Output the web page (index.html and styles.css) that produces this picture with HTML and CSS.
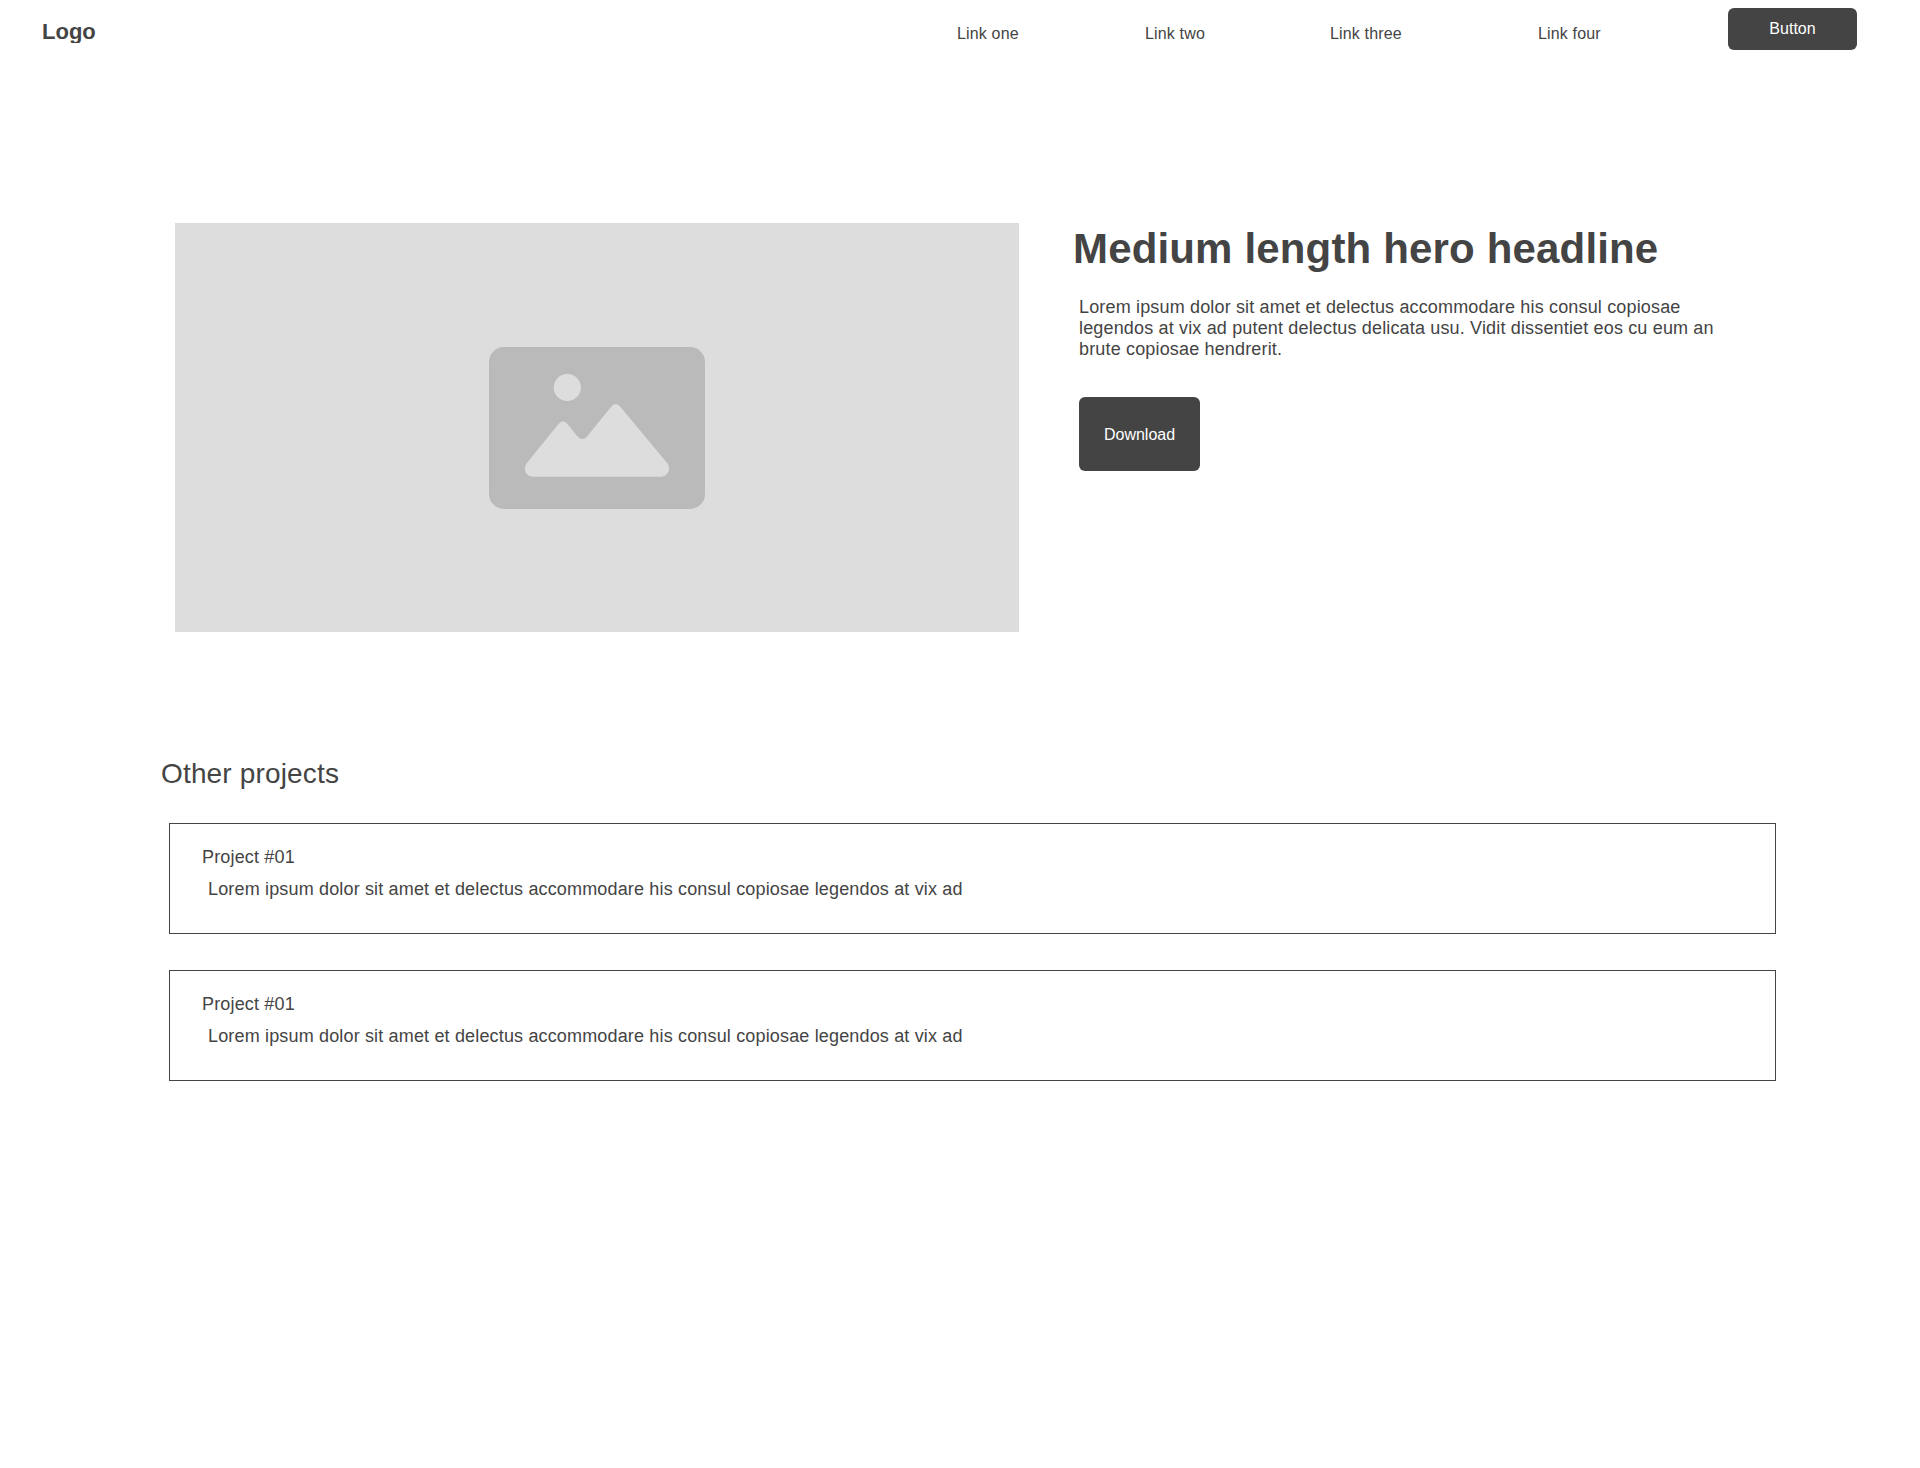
FILE: index.html
```html
<!DOCTYPE html>
<html lang="en">
<head>
<meta charset="utf-8">
<title>Projects</title>
<link rel="stylesheet" href="styles.css">
</head>
<body>
<header class="site-header">
  <a class="logo">Logo</a>
  <a class="nav-link">Link one</a>
  <a class="nav-link">Link two</a>
  <a class="nav-link">Link three</a>
  <a class="nav-link">Link four</a>
  <button class="button">Button</button>
</header>
<main>
  <section class="hero">
    <div class="hero-image">
      <svg class="placeholder" viewBox="0 0 216 162" width="216" height="162" aria-hidden="true">
        <rect width="216" height="162" rx="15" fill="#bababa"/>
        <circle cx="78.3" cy="40.500" r="13.6" fill="#ddd"/>
        <path fill="#ddd" d="M37.500 116.500 L69.500 77 Q74 71.500 78.500 77 L88.500 89.500 Q93.300 94.500 98 89.500 L122 60 Q126.700 54 131.500 60 L178.500 116.500 C182.500 122 178.500 129.700 172 129.700 H44 C37 129.700 33.500 122 37.500 116.500 Z"/>
      </svg>
    </div>
    <div class="hero-copy">
      <h1 class="hero-title">Medium length hero headline</h1>
      <p class="hero-text">Lorem ipsum dolor sit amet et delectus accommodare his consul copiosae legendos at vix ad putent delectus delicata usu. Vidit dissentiet eos cu eum an brute copiosae hendrerit.</p>
      <button class="button download">Download</button>
    </div>
  </section>
  <section class="projects">
    <h2 class="projects-title">Other projects</h2>
    <div class="project-list">
      <article class="project">
        <h3 class="project-name">Project #01</h3>
        <p class="project-text">Lorem ipsum dolor sit amet et delectus accommodare his consul copiosae legendos at vix ad</p>
      </article>
      <article class="project">
        <h3 class="project-name">Project #01</h3>
        <p class="project-text">Lorem ipsum dolor sit amet et delectus accommodare his consul copiosae legendos at vix ad</p>
      </article>
    </div>
  </section>
</main>
</body>
</html>
```
FILE: styles.css
```css
* { box-sizing: border-box; }

body {
  margin: 0;
  min-height: 1468px;
  background: #fff;
  color: #444;
  font-family: "Liberation Sans", Arial, sans-serif;
  font-size: 18px;
  line-height: 21px;
  letter-spacing: 0.16px;
}

h1, h2, h3, p { margin: 0; font-weight: 400; }

.site-header {
  display: grid;
  grid-template-columns: 915px 188px 185px 208px 190px 129px;
  align-items: start;
  height: 58px;
  padding: 8px 0 0 42px;
}

.logo {
  height: 24px;
  margin-top: 11px;
  overflow: hidden;
  font-size: 22px;
  font-weight: 700;
  line-height: 25px;
  letter-spacing: 0;
}

.nav-link {
  margin-top: 17px;
  font-size: 16px;
  line-height: 18px;
}

.button {
  height: 42px;
  padding: 0;
  border: 0;
  border-radius: 6px;
  background: #444;
  color: #fff;
  font: 16px/18px "Liberation Sans", Arial, sans-serif;
  letter-spacing: 0;
}

.hero {
  display: grid;
  grid-template-columns: 844px 660px;
  column-gap: 54px;
  padding: 165px 0 0 175px;
}

.hero-image {
  display: flex;
  align-items: center;
  justify-content: center;
  height: 409px;
  padding-top: 1px;
  background: #ddd;
}

.placeholder { display: block; }

.hero-title {
  font-size: 42px;
  font-weight: 700;
  line-height: 48px;
  letter-spacing: 0.16px;
  padding-top: 2px;
}

.hero-text {
  width: 645px;
  padding: 24px 0 0 6px;
}

.download {
  display: block;
  width: 121px;
  height: 74px;
  margin: 37px 0 0 6px;
  padding: 2px 0 0;
}

.projects { padding: 126px 144px 0 161px; }

.projects-title {
  font-size: 28px;
  line-height: 32px;
}

.project-list {
  display: grid;
  gap: 36px;
  padding: 33px 0 0 8px;
}

.project {
  height: 111px;
  padding: 23px 32px 0;
  border: 1px solid #444;
}

.project-name { font-size: 18px; }

.project-text { padding: 11px 0 0 6px; }
```
